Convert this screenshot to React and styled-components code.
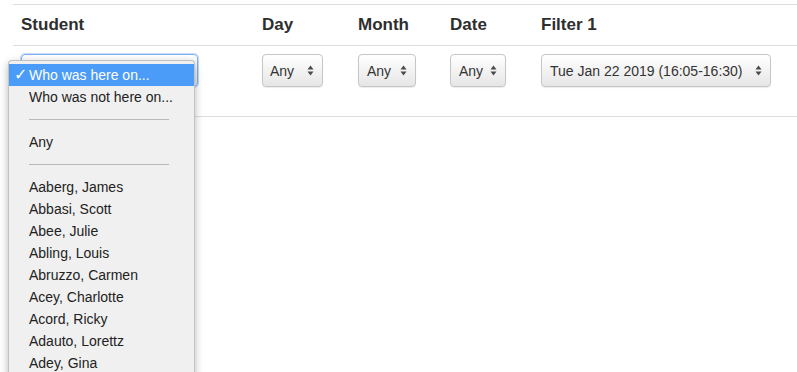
import React from "react";
import styled, { createGlobalStyle } from "styled-components";

const Global = createGlobalStyle`
  html, body { margin: 0; padding: 0; background: #fff; }
  body { font-family: "Liberation Sans", Arial, sans-serif; color: #333; overflow: hidden; }
`;

const Page = styled.div`
  width: 797px;
  height: 372px;
  padding: 4px 0 0 13px;
  box-sizing: border-box;
  position: relative;
`;

const Table = styled.div`
  display: grid;
  grid-template-columns: 241px 96px 92px 91px 1fr;
  border-top: 1px solid #dddddd;
`;

const HeadCell = styled.div`
  height: 41px;
  box-sizing: border-box;
  padding: 0 8px 1px;
  display: flex;
  align-items: center;
  font-weight: bold;
  font-size: 17px;
  color: #2e2e2e;
  border-bottom: 1px solid #dddddd;
`;

const BodyCell = styled.div`
  height: 71px;
  box-sizing: border-box;
  padding: 8px 8px 0;
  border-bottom: 1px solid #dddddd;
  position: relative;
`;

const Select = styled.div`
  width: ${(p) => p.$w}px;
  height: 33px;
  box-sizing: border-box;
  display: flex;
  align-items: center;
  justify-content: space-between;
  padding: 0 8px 0 ${(p) => p.$pl || 8}px;
  border: 1px solid ${(p) => (p.$focus ? "#7fb2ee" : "#c6c6c6")};
  border-radius: 4px;
  background: linear-gradient(#ffffff, #f4f4f4 45%, #e6e6e6);
  box-shadow: ${(p) =>
    p.$focus
      ? "0 0 0 1px rgba(90,150,230,0.35)"
      : "0 1px 1px rgba(0,0,0,0.08)"};
  font-size: 14px;
  color: #333;
`;

const Arrows = () => (
  <svg width="7" height="11" viewBox="0 0 7 11">
    <path d="M3.5 0.5 L6.5 4.5 L0.5 4.5 Z" fill="#4a4a4a" />
    <path d="M3.5 10.5 L6.5 6.5 L0.5 6.5 Z" fill="#4a4a4a" />
  </svg>
);

const Menu = styled.div`
  position: absolute;
  left: -5px;
  top: 14px;
  width: 187px;
  height: 330px;
  box-sizing: border-box;
  padding-top: 3px;
  background: #f0f0f0;
  border: 1px solid #c2c2c2;
  border-bottom: none;
  border-radius: 4px 4px 0 0;
  box-shadow: 0 3px 9px rgba(0, 0, 0, 0.28);
  font-size: 14px;
  color: #222;
  z-index: 5;
`;

const Item = styled.div`
  height: 22px;
  display: flex;
  align-items: center;
  padding-left: 20px;
  position: relative;
  background: ${(p) => (p.$active ? "#4b9bf8" : "transparent")};
  color: ${(p) => (p.$active ? "#fff" : "#222")};
  white-space: nowrap;
`;

const Check = styled.span`
  position: absolute;
  left: 5px;
  top: 1px;
  font-family: "DejaVu Sans", sans-serif;
  font-size: 16px;
`;

const Sep = styled.div`
  height: 1px;
  width: 140px;
  margin: 11px 0 11px 20px;
  background: #b9b9b9;
`;

const names = [
  "Aaberg, James",
  "Abbasi, Scott",
  "Abee, Julie",
  "Abling, Louis",
  "Abruzzo, Carmen",
  "Acey, Charlotte",
  "Acord, Ricky",
  "Adauto, Lorettz",
  "Adey, Gina",
];

export default function App() {
  return (
    <>
      <Global />
      <Page>
        <Table>
          <HeadCell>Student</HeadCell>
          <HeadCell>Day</HeadCell>
          <HeadCell>Month</HeadCell>
          <HeadCell>Date</HeadCell>
          <HeadCell>Filter 1</HeadCell>

          <BodyCell>
            <Select $w={177} $focus>
              <span />
              <Arrows />
            </Select>
            <Menu>
              <Item $active>
                <Check>✓</Check>Who was here on...
              </Item>
              <Item>Who was not here on...</Item>
              <Sep />
              <Item>Any</Item>
              <Sep />
              {names.map((n) => (
                <Item key={n}>{n}</Item>
              ))}
            </Menu>
          </BodyCell>
          <BodyCell>
            <Select $w={61} $pl={7}>
              <span>Any</span>
              <Arrows />
            </Select>
          </BodyCell>
          <BodyCell>
            <Select $w={58}>
              <span>Any</span>
              <Arrows />
            </Select>
          </BodyCell>
          <BodyCell>
            <Select $w={56}>
              <span>Any</span>
              <Arrows />
            </Select>
          </BodyCell>
          <BodyCell>
            <Select $w={230}>
              <span>Tue Jan 22 2019 (16:05-16:30)</span>
              <Arrows />
            </Select>
          </BodyCell>
        </Table>
      </Page>
    </>
  );
}
